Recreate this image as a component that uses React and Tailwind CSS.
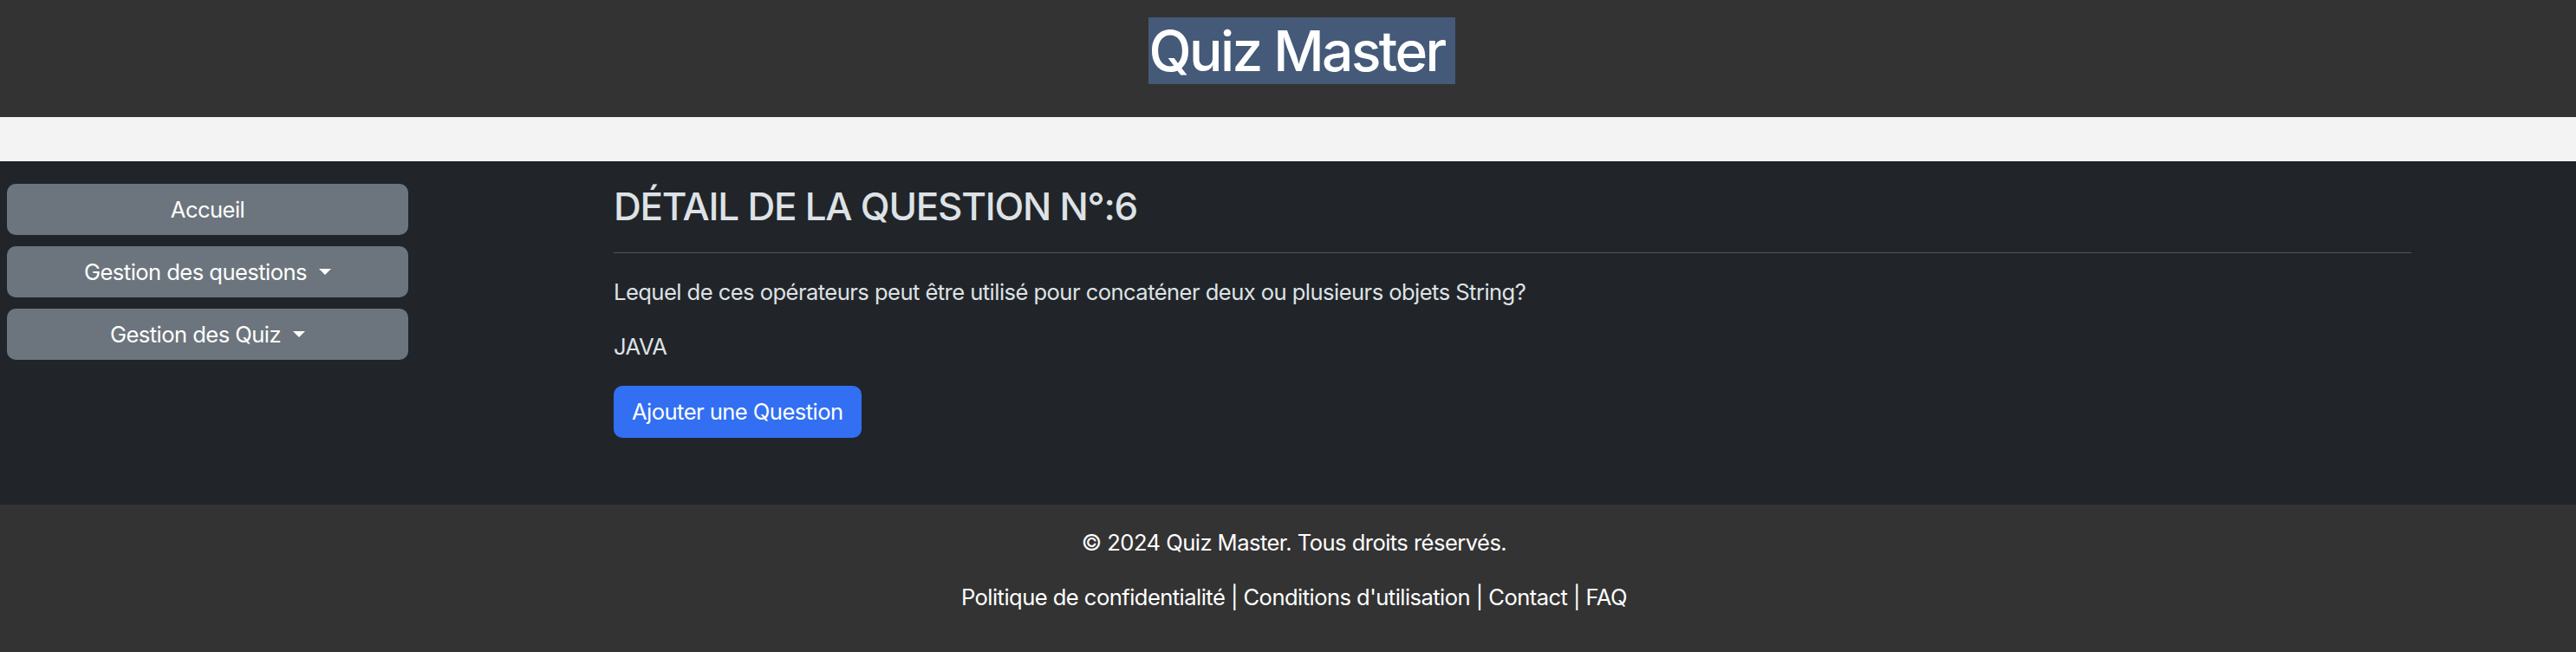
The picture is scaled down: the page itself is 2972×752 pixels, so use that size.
import React from 'react';

const font = { fontFamily: 'Inter, "Liberation Sans", sans-serif' };

function Caret() {
  return (
    <span className="inline-block ml-[14px] align-middle w-0 h-0 border-t-[7px] border-t-white border-x-[7px] border-x-transparent" />
  );
}

function SideButton({ label, caret = false }) {
  return (
    <button className="h-[59px] w-full rounded-[10px] bg-[#6c757d] text-white text-[25.6px] leading-[38px] tracking-[-0.022em] flex items-center justify-center">
      <span>{label}</span>
      {caret && <Caret />}
    </button>
  );
}

export default function App() {
  return (
    <div className="min-h-[752px] w-full bg-[#333333]" style={font}>
      {/* header */}
      <header className="h-[135px] bg-[#333333] flex justify-center pt-[20px] pl-[32px]">
        <h1 className="h-[77px] bg-[#445a78] pr-[12px] text-white text-[64px] leading-[77px] font-medium tracking-[-0.04em]">
          Quiz Master
        </h1>
      </header>

      <div className="h-[51px] bg-[#f3f3f3]" />

      {/* main */}
      <main className="h-[396px] bg-[#212529] flex pt-[26px]">
        <nav className="w-[463px] ml-[8px] flex flex-col gap-[13px]">
          <SideButton label="Accueil" />
          <SideButton label="Gestion des questions" caret />
          <SideButton label="Gestion des Quiz" caret />
        </nav>

        <section className="ml-[237px] w-[2074px] text-[#dee2e6]">
          <h3 className="text-[44px] leading-[53px] font-medium uppercase tracking-[-0.028em]">
            Détail de la question N°:6
          </h3>
          <hr className="mt-[26px] border-t border-[#54575b]" />
          <div className="tracking-[-0.022em] text-[25.6px] leading-[38.4px]">
            <p className="mt-[26px]">
              Lequel de ces opérateurs peut être utilisé pour concaténer deux ou plusieurs objets String?
            </p>
            <p className="mt-[25px]">JAVA</p>
            <button className="mt-[25px] h-[60px] px-[21px] rounded-[10px] bg-[#326ff2] text-white leading-[38px]">
              Ajouter une Question
            </button>
          </div>
        </section>
      </main>

      {/* footer */}
      <footer className="h-[170px] bg-[#333333] text-white text-center text-[25.6px] leading-[38.4px] tracking-[-0.022em] pt-[25px] pl-[14px]">
        <p>© 2024 Quiz Master. Tous droits réservés.</p>
        <p className="mt-[25px]">
          Politique de confidentialité | Conditions d'utilisation | Contact | FAQ
        </p>
      </footer>
    </div>
  );
}
